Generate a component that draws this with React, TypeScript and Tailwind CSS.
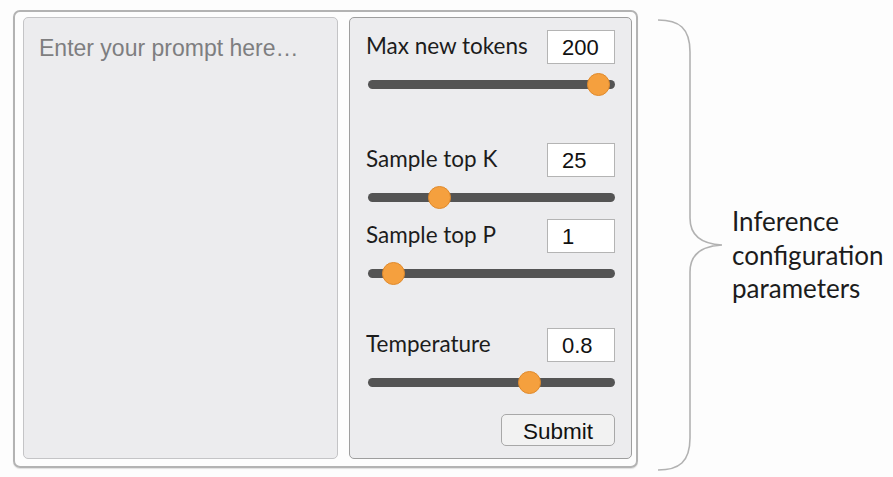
import React from "react";

type Param = {
  label: string;
  value: string;
  thumb: number;
  gapBefore: number;
};

const params: Param[] = [
  { label: "Max new tokens", value: "200", thumb: 230, gapBefore: 0 },
  { label: "Sample top K", value: "25", thumb: 71, gapBefore: 47 },
  { label: "Sample top P", value: "1", thumb: 25, gapBefore: 10 },
  { label: "Temperature", value: "0.8", thumb: 161, gapBefore: 43 },
];

function Slider({ thumb }: { thumb: number }) {
  return (
    <div className="relative mt-[8px] ml-[2px] h-[24px] w-[247px]">
      <div className="absolute top-[8px] left-0 h-[9px] w-full rounded-full bg-[#545454]" />
      <div
        className="absolute top-[1px] h-[23px] w-[23px] rounded-full border border-[#e08a2c] bg-[#f5a03e]"
        style={{ left: thumb - 11.5 }}
      />
    </div>
  );
}

function ParamBlock({ param }: { param: Param }) {
  return (
    <div style={{ marginTop: param.gapBefore }}>
      <div className="flex items-center justify-between">
        <span className="-mt-[3px] font-['Lato',sans-serif] text-[22.5px] text-[#1c1c1c]">{param.label}</span>
        <div className="flex h-[34px] w-[68px] items-center border border-[#b4b4b4] bg-white pl-[14px] font-['Liberation_Sans',Arial,sans-serif] text-[22px] text-[#111]">
          {param.value}
        </div>
      </div>
      <Slider thumb={param.thumb} />
    </div>
  );
}

export default function App() {
  return (
    <div className="flex h-[477px] w-[893px] items-start bg-[#fdfdfd]">
      <div className="mt-[10px] ml-[13px] flex h-[458px] w-[625px] gap-[11px] rounded-[7px] border-2 border-[#b3b3b3] pt-[5px] pr-[4px] pb-[7px] pl-[8px] shadow-[0_1px_1px_rgba(0,0,0,0.12)]">
        <div className="h-full w-[315px] rounded-[5px] border border-[#c4c4c6] bg-[#ececee] px-[15px] pt-[13px]">
          <span className="font-['Liberation_Sans',Arial,sans-serif] text-[23px] text-[#7e7e80]">
            Enter your prompt here…
          </span>
        </div>
        <div className="flex h-full w-[283px] flex-col rounded-[5px] border border-[#9e9e9e] bg-[#ececee] pt-[12px] pr-[16px] pl-[16px]">
          {params.map((param) => (
            <ParamBlock key={param.label} param={param} />
          ))}
          <div className="mt-[20px] flex justify-end">
            <button className="h-[32px] w-[114px] rounded-[5px] border border-[#a8a8a8] bg-[#f2f2f2] font-['Liberation_Sans',Arial,sans-serif] text-[22.5px] text-[#111]">
              Submit
            </button>
          </div>
        </div>
      </div>
      <svg className="mt-[18px] ml-[17px]" width="70" height="454" viewBox="0 0 70 454">
        <path
          d="M3 2 C24 2 35 10 35 34 L35 200 C35 218 47 226 67 227 C47 228 35 236 35 254 L35 420 C35 444 24 452 3 452"
          fill="none"
          stroke="#b2b2b2"
          strokeWidth="1.6"
        />
      </svg>
      <div className="mt-[205px] ml-[7px] font-['Lato',sans-serif] text-[26px] leading-[33.5px] text-[#1c1c1c]">
        <div>Inference</div>
        <div>configuration</div>
        <div>parameters</div>
      </div>
    </div>
  );
}
